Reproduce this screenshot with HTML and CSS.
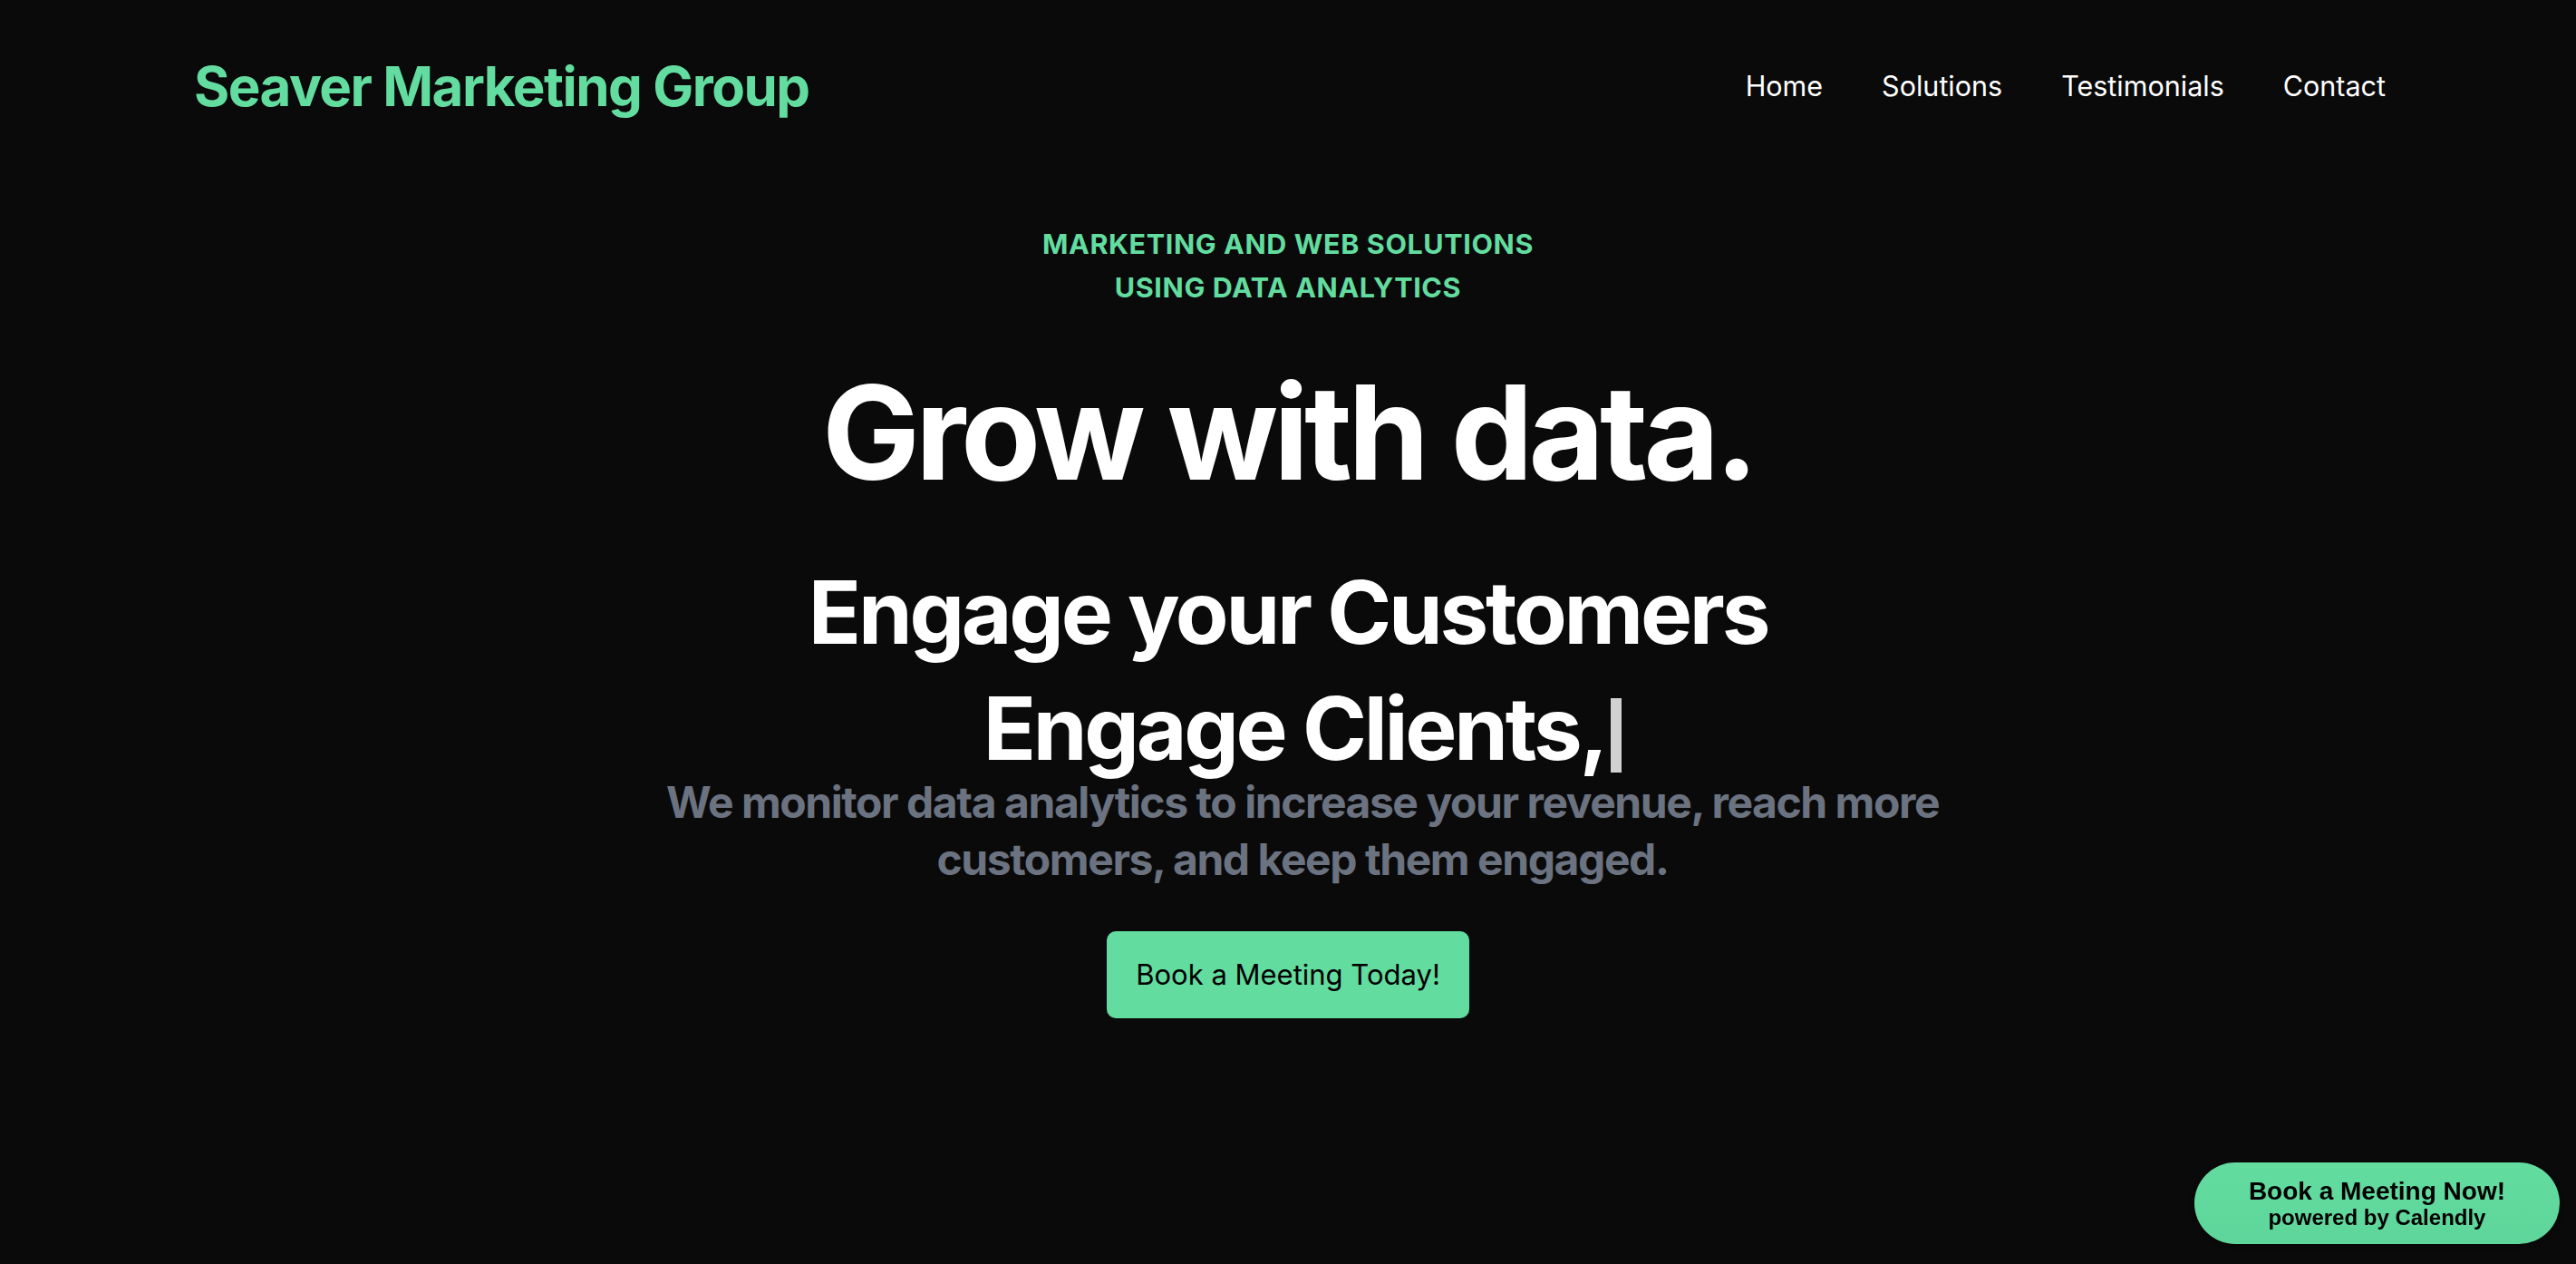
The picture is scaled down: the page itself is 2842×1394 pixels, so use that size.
FILE: index.html
```html
<!DOCTYPE html>
<html lang="en">
<head>
<meta charset="utf-8">
<title>Seaver Marketing Group</title>
<link rel="stylesheet" href="styles.css">
</head>
<body>
<header class="site-header">
  <a class="logo" href="#">Seaver Marketing Group</a>
  <nav class="nav">
    <a href="#">Home</a>
    <a href="#">Solutions</a>
    <a href="#">Testimonials</a>
    <a href="#">Contact</a>
  </nav>
</header>
<main class="hero">
  <p class="eyebrow">Marketing and web solutions<br>using data analytics</p>
  <h1 class="title">Grow with data.</h1>
  <h2 class="engage"><span class="engage-line">Engage your Customers</span><span class="engage-line typed">Engage Clients,<span class="cursor"></span></span></h2>
  <p class="lead">We monitor data analytics to increase your revenue, reach more customers, and keep them engaged.</p>
  <a class="cta" href="#">Book a Meeting Today!</a>
</main>
<div class="calendly-badge">
  <div class="badge-content">Book a Meeting Now!<span>powered by Calendly</span></div>
</div>
</body>
</html>
```
FILE: styles.css
```css
html, body {
  margin: 0;
  padding: 0;
}
body {
  background: #0a0a0a;
  font-family: Inter, "Noto Sans", sans-serif;
  color: #ffffff;
  min-height: 1394px;
}
a { text-decoration: none; color: inherit; }

.site-header {
  height: 190px;
  display: flex;
  align-items: center;
  justify-content: space-between;
  padding: 0 210px 0 214px;
}
.logo {
  font-size: 60px;
  font-weight: 700;
  color: #63dca0;
  letter-spacing: -0.025em;
  line-height: 1;
}
.nav {
  display: flex;
  gap: 65px;
}
.nav a {
  font-size: 30.5px;
  line-height: 1;
  color: #ffffff;
}

.hero {
  display: flex;
  flex-direction: column;
  align-items: center;
  text-align: center;
}
.eyebrow {
  margin: 55px 0 0;
  font-size: 30.5px;
  line-height: 48px;
  font-weight: 700;
  letter-spacing: 0.02em;
  text-transform: uppercase;
  color: #63dca0;
}
.title {
  margin: 64px 0 0;
  font-size: 144px;
  line-height: 1;
  font-weight: 700;
  letter-spacing: -0.035em;
}
.engage {
  margin: 62px 0 0;
  font-size: 96px;
  line-height: 128px;
  font-weight: 700;
  letter-spacing: -0.034em;
}
.engage-line {
  display: block;
}
.typed {
  padding-left: 32px;
}
.cursor {
  display: inline-block;
  width: 12px;
  height: 82px;
  margin-left: 6px;
  background: #d1d1d1;
  vertical-align: -14px;
}
.lead {
  margin: -14px 0 0 32px;
  max-width: 1440px;
  font-size: 48px;
  line-height: 63px;
  font-weight: 700;
  letter-spacing: -0.03em;
  color: #6b7280;
}
.cta {
  margin-top: 48px;
  padding: 25px 32px;
  font-size: 31px;
  line-height: 46px;
  color: #000000;
  background: #63dca0;
  border-radius: 10px;
}

.calendly-badge {
  position: fixed;
  right: 18px;
  bottom: 22px;
}
.badge-content {
  display: flex;
  flex-direction: column;
  justify-content: center;
  height: 90px;
  padding: 0 60px;
  border-radius: 45px;
  background: linear-gradient(#63dca0, #5ed69b);
  box-shadow: rgba(0, 0, 0, 0.25) 0 2px 5px;
  font-family: "Liberation Sans", Arial, sans-serif;
  font-weight: 700;
  font-size: 28px;
  line-height: 31px;
  color: #000000;
  text-align: center;
}
.badge-content span {
  display: block;
  font-size: 24px;
  line-height: 28px;
}
```
